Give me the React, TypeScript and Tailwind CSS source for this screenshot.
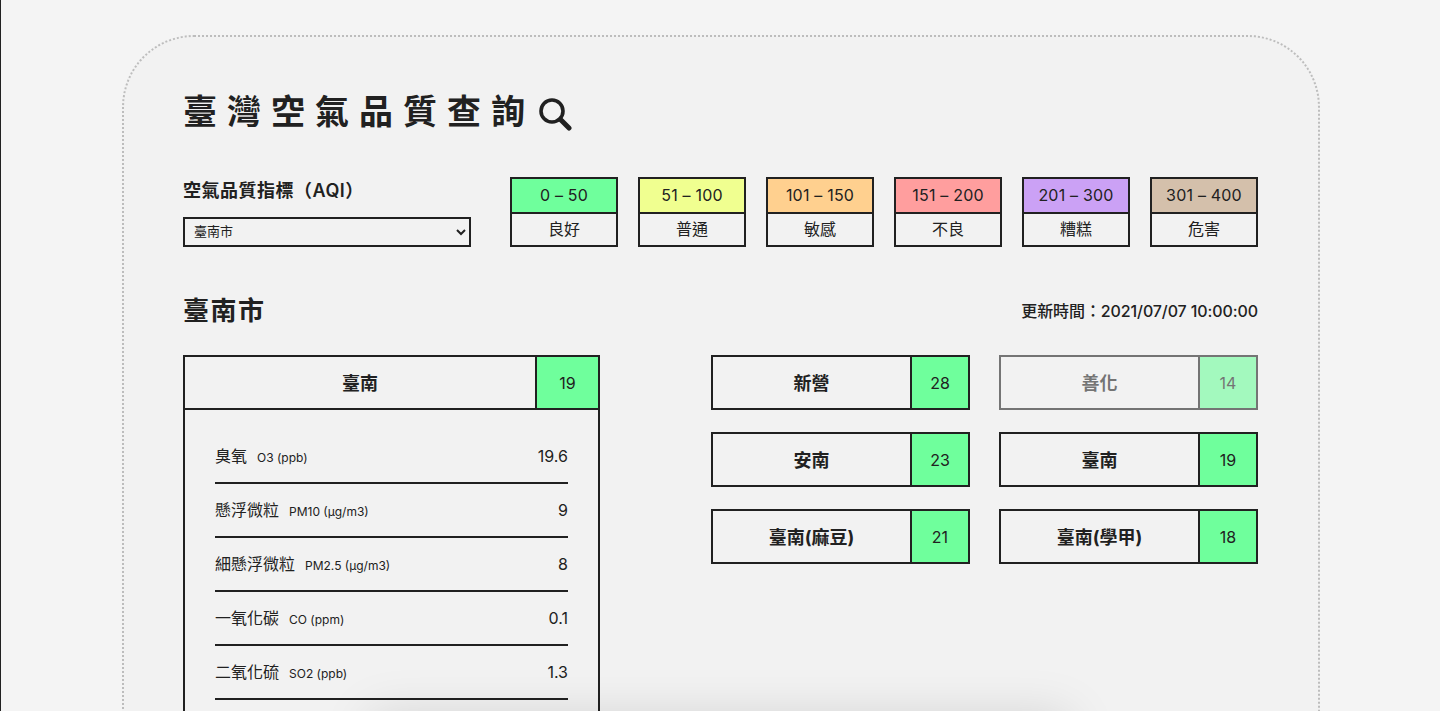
const legend = [
  { range: "0 – 50", label: "良好", bg: "bg-[#6fff9c]" },
  { range: "51 – 100", label: "普通", bg: "bg-[#f0ff90]" },
  { range: "101 – 150", label: "敏感", bg: "bg-[#ffd08f]" },
  { range: "151 – 200", label: "不良", bg: "bg-[#ff9e9e]" },
  { range: "201 – 300", label: "糟糕", bg: "bg-[#cba1f5]" },
  { range: "301 – 400", label: "危害", bg: "bg-[#d4c0ab]" },
];

const pollutants = [
  { name: "臭氧", unit: "O3 (ppb)", value: "19.6" },
  { name: "懸浮微粒", unit: "PM10 (μg/m3)", value: "9" },
  { name: "細懸浮微粒", unit: "PM2.5 (μg/m3)", value: "8" },
  { name: "一氧化碳", unit: "CO (ppm)", value: "0.1" },
  { name: "二氧化硫", unit: "SO2 (ppb)", value: "1.3" },
];

const stations = [
  { name: "新營", aqi: 28 },
  { name: "善化", aqi: 14, faded: true },
  { name: "安南", aqi: 23 },
  { name: "臺南", aqi: 19 },
  { name: "臺南(麻豆)", aqi: 21 },
  { name: "臺南(學甲)", aqi: 18 },
];

function SearchIcon() {
  return (
    <svg width="34" height="34" viewBox="0 0 34 34" fill="none" stroke="#212121" strokeWidth="3.6" className="mt-1 ml-[3px] shrink-0">
      <circle cx="14" cy="14" r="11" />
      <path d="M22.5 22.5 L31 31" strokeWidth="5" strokeLinecap="round" />
    </svg>
  );
}

function Station({ name, aqi, faded }: { name: string; aqi: number; faded?: boolean }) {
  return (
    <div className={`flex h-[55px] border-2 border-[#212121] ${faded ? "opacity-60" : ""}`}>
      <div className="flex flex-1 items-center justify-center pt-0.5 text-[18px] font-bold">{name}</div>
      <div className="flex w-[58px] items-center justify-center border-l-2 border-[#212121] bg-[#6fff9c] text-base">{aqi}</div>
    </div>
  );
}

export default function App() {
  return (
    <div className="h-[711px] overflow-hidden border-l border-[#212121] bg-[#f4f4f4] pt-[35px] pr-[120px] pl-[121px] font-['Inter','Noto_Sans_CJK_TC',sans-serif] text-[#212121]">
      <div className="relative min-h-[900px] rounded-[72px] border-2 border-dotted border-[#bdbdbd] bg-[#f2f2f2] pt-[52px] pr-[60px] pl-[59px]">
        <div className="flex items-center">
          <h1 className="text-[34px] leading-[46px] font-bold tracking-[10px]">臺灣空氣品質查詢</h1>
          <SearchIcon />
        </div>

        <div className="mt-[42px] flex justify-between">
          <div className="w-[288px]">
            <h2 className="text-[18px] leading-[28px] font-semibold tracking-[0.5px]">空氣品質指標（AQI）</h2>
            <select className="mt-[12px] h-[30px] w-full border-2 border-[#212121] bg-[#f2f2f2] pb-0.5 pl-[5px] text-[13px]">
              <option>臺南市</option>
            </select>
          </div>
          <div className="flex gap-5">
            {legend.map((l) => (
              <div key={l.range} className="h-[70px] w-[108px] border-2 border-[#212121]">
                <div className={`flex h-[35px] items-center justify-center border-b-2 border-[#212121] pb-0.5 text-base tracking-[0.2px] ${l.bg}`}>{l.range}</div>
                <div className="flex h-[31px] items-center justify-center pb-0.5 text-base">{l.label}</div>
              </div>
            ))}
          </div>
        </div>

        <div className="mt-[46px] flex items-center justify-between">
          <h2 className="text-[26px] leading-9 font-bold tracking-[1.5px]">臺南市</h2>
          <p className="text-base font-medium tracking-[-0.1px]">更新時間：2021/07/07 10:00:00</p>
        </div>

        <div className="mt-[26px] flex justify-between">
          <div className="h-fit w-[417px] border-2 border-[#212121]">
            <div className="flex h-[53px] border-b-2 border-[#212121]">
              <div className="flex flex-1 items-center justify-center pt-0.5 text-[18px] font-bold">臺南</div>
              <div className="flex w-[63px] items-center justify-center border-l-2 border-[#212121] bg-[#6fff9c] text-base">19</div>
            </div>
            <ul className="px-[30px] pt-[20px] pb-[60px]">
              {pollutants.map((p) => (
                <li key={p.name} className="flex h-[54px] items-center justify-between border-b-2 border-[#212121]">
                  <div className="flex items-baseline gap-2.5">
                    <span className="text-base">{p.name}</span>
                    <span className="text-xs">{p.unit}</span>
                  </div>
                  <span className="text-base">{p.value}</span>
                </li>
              ))}
            </ul>
          </div>
          <div className="grid h-fit w-[547px] grid-cols-2 gap-x-[29px] gap-y-[22px]">
            {stations.map((s) => (
              <Station key={s.name} {...s} />
            ))}
          </div>
        </div>
      </div>
      <div className="absolute top-[735px] left-[390px] h-10 w-[660px] shadow-[0_0_50px_20px_rgba(0,0,0,0.13)]" />
    </div>
  );
}
